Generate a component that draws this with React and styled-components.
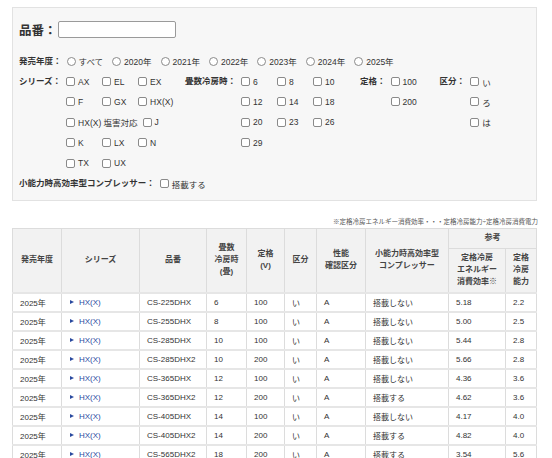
import styled, { createGlobalStyle } from 'styled-components';

const GlobalStyle = createGlobalStyle`
  body {
    margin: 0;
    background: #fff;
    font-family: "Liberation Sans", "Noto Sans CJK JP", sans-serif;
    color: #333;
  }
`

const years = ['すべて', '2020年', '2021年', '2022年', '2023年', '2024年', '2025年'];

const groups = [
  { label: 'シリーズ：', width: 114, items: ['AX', 'EL', 'EX', 'F', 'GX', 'HX(X)', 'HX(X) 塩害対応', 'J', 'K', 'LX', 'N', 'TX', 'UX'] },
  { label: '畳数冷房時：', width: 114, items: ['6', '8', '10', '12', '14', '18', '20', '23', '26', '29'] },
  { label: '定格：', width: 44, items: ['100', '200'] },
  { label: '区分：', width: 60, items: ['い', 'ろ', 'は'] },
];

const cols = [49, 78, 67, 40, 38, 32, 49, 83, 57, 31];

const rows = [
  ['CS-225DHX', '6', '100', '搭載しない', '5.18', '2.2'],
  ['CS-255DHX', '8', '100', '搭載しない', '5.00', '2.5'],
  ['CS-285DHX', '10', '100', '搭載しない', '5.44', '2.8'],
  ['CS-285DHX2', '10', '200', '搭載しない', '5.66', '2.8'],
  ['CS-365DHX', '12', '100', '搭載しない', '4.36', '3.6'],
  ['CS-365DHX2', '12', '200', '搭載する', '4.62', '3.6'],
  ['CS-405DHX', '14', '100', '搭載しない', '4.17', '4.0'],
  ['CS-405DHX2', '14', '200', '搭載する', '4.82', '4.0'],
  ['CS-565DHX2', '18', '200', '搭載する', '3.54', '5.6'],
];

export default function App(){
  return (
    <Page>
      <GlobalStyle />
      <Panel>
        <NumberRow>
          <BigLabel>品番：</BigLabel>
          <TextInput />
        </NumberRow>

        <FilterRow>
          <Label>発売年度：</Label>
          {years.map((y)=>(
            <RadioItem key={y}><Radio />{y}</RadioItem>
          ))}
        </FilterRow>

        <GroupRow>
          {groups.map((g)=>(
            <Group key={g.label}>
              <Label>{g.label}</Label>
              <Options $width={g.width}>
                {g.items.map((it)=>(
                  <CheckItem key={it}><Check />{it}</CheckItem>
                ))}
              </Options>
            </Group>
          ))}
        </GroupRow>

        <FilterRow>
          <Label>小能力時高効率型コンプレッサー：</Label>
          <CheckItem><Check />搭載する</CheckItem>
        </FilterRow>
      </Panel>

      <Note>※定格冷房エネルギー消費効率・・・定格冷房能力÷定格冷房消費電力</Note>

      <Table>
        <colgroup>
          {cols.map((w, i)=><col key={i} style={{width: w}} />)}
        </colgroup>
        <thead>
          <tr>
            <Th rowSpan={2}>発売年度</Th>
            <Th rowSpan={2}>シリーズ</Th>
            <Th rowSpan={2}>品番</Th>
            <Th rowSpan={2}>畳数<br/>冷房時<br/>(畳)</Th>
            <Th rowSpan={2}>定格<br/>(V)</Th>
            <Th rowSpan={2}>区分</Th>
            <Th rowSpan={2}>性能<br/>確認区分</Th>
            <Th rowSpan={2}>小能力時高効率型<br/>コンプレッサー</Th>
            <Th colSpan={2} $h={19}>参考</Th>
          </tr>
          <tr>
            <Th $h={43}>定格冷房<br/>エネルギー<br/>消費効率※</Th>
            <Th $h={43}>定格<br/>冷房<br/>能力</Th>
          </tr>
        </thead>
        <tbody>
          {rows.map((r)=>(
            <tr key={r[0]}>
              <Td>2025年</Td>
              <Td><SeriesLink>HX(X)</SeriesLink></Td>
              <Td>{r[0]}</Td>
              <Td>{r[1]}</Td>
              <Td>{r[2]}</Td>
              <Td>い</Td>
              <Td>A</Td>
              <Td>{r[3]}</Td>
              <Td>{r[4]}</Td>
              <Td>{r[5]}</Td>
            </tr>
          ))}
        </tbody>
      </Table>
    </Page>
  )
}

const Page = styled.div`
  padding: 7px 15px 0 12px;
  width: 525px;
`

const Panel = styled.div`
  background: #f7f7f7;
  border: 1px solid #e2e2e2;
  padding: 13px 7px 6px 6px;
`

const NumberRow = styled.div`
  display: flex;
  align-items: center;
  height: 17px;
  margin-bottom: 13px;
`

const BigLabel = styled.span`
  font-size: 12.5px;
  font-weight: 700;
  color: #333;
  white-space: nowrap;
`

const TextInput = styled.div`
  width: 116px;
  height: 15px;
  background: #fff;
  border: 1px solid #9a9a9a;
  border-radius: 2px;
  margin-left: 1px;
`

const FilterRow = styled.div`
  display: flex;
  align-items: center;
  height: 20.4px;
  font-size: 8.5px;
`

const Label = styled.span`
  font-size: 8.5px;
  font-weight: 700;
  color: #333;
  white-space: nowrap;
  margin-right: 5px;
  height: 20.4px;
  line-height: 20.4px;
`

const RadioItem = styled.span`
  display: inline-flex;
  align-items: center;
  gap: 3px;
  margin-right: 9px;
  font-size: 8.5px;
  color: #333;
  white-space: nowrap;
`

const Radio = styled.span`
  width: 7px;
  height: 7px;
  border: 1px solid #8a8a8a;
  border-radius: 50%;
  background: #fff;
`

const GroupRow = styled.div`
  display: flex;
  align-items: flex-start;
`

const Group = styled.div`
  display: flex;
  align-items: flex-start;
  margin-right: 5px;
`

const Options = styled.div`
  display: flex;
  flex-wrap: wrap;
  width: ${p => p.$width}px;
`

const CheckItem = styled.span`
  display: inline-flex;
  align-items: center;
  gap: 3px;
  min-width: 31px;
  height: 20.4px;
  margin-right: 5px;
  font-size: 8.5px;
  color: #333;
  white-space: nowrap;
`

const Check = styled.span`
  width: 7px;
  height: 7px;
  border: 1px solid #8a8a8a;
  border-radius: 2px;
  background: #fff;
  flex: none;
`

const Note = styled.div`
  margin-top: 16px;
  text-align: right;
  font-size: 6.5px;
  color: #555;
  height: 10px;
  line-height: 10px;
  margin-right: -1px;
`

const Table = styled.table`
  margin-top: 1px;
  width: 524px;
  table-layout: fixed;
  border-collapse: collapse;
  font-size: 8px;
  color: #333;
`

const Th = styled.th`
  background: #f2f2f2;
  border: 1px solid #dcdcdc;
  font-weight: 700;
  color: #444;
  line-height: 12px;
  height: ${p => p.$h ? `${p.$h}px` : 'auto'};
  padding: 0 2px;
  text-align: center;
  vertical-align: middle;
`

const Td = styled.td`
  border-left: 1px solid #dcdcdc;
  border-right: 1px solid #dcdcdc;
  border-top: 2px solid #e6e6e6;
  height: 17px;
  padding: 0 0 0 7px;
  white-space: nowrap;
  overflow: hidden;
  vertical-align: middle;
`

const SeriesLink = styled.a`
  display: inline-flex;
  align-items: center;
  gap: 5px;
  color: #2a4a9f;
  text-decoration: none;
  padding-left: 1px;

  &::before{
    content: '';
    border-left: 4px solid #2a4a9f;
    border-top: 2px solid transparent;
    border-bottom: 2px solid transparent;
  }
`
